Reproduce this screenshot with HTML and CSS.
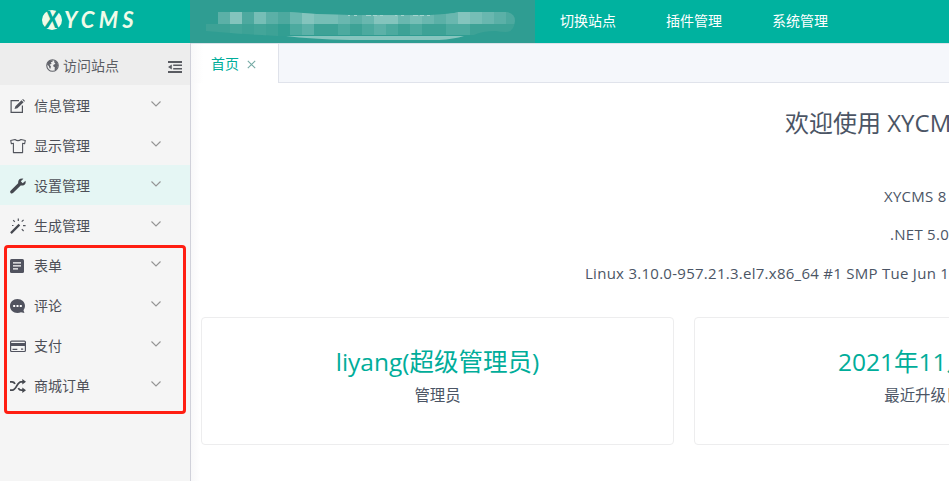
FILE: index.html
```html
<!DOCTYPE html>
<html lang="zh-CN">
<head>
<meta charset="utf-8">
<title>XYCMS</title>
<link rel="stylesheet" href="styles.css">
</head>
<body>
<header class="top">
  <div class="logo"><span class="logo-x">X</span><span class="logo-rest">YCMS</span></div>
  <div class="masked">
    <svg width="345" height="43" viewBox="0 0 345 43">
      <defs><clipPath id="brush"><path d="M28 12H100Q130 15 160 15H240Q262 14 268 12H316Q325 13 325 21Q324 32 316 32Q310 32 306 31Q292 31 284 35H98V36H88Q50 34 16 31V24H28Z"/></clipPath></defs>
      <g clip-path="url(#brush)" shape-rendering="crispEdges">
        <path fill="#4da99f" d="M28 12H328V24H28z"/><path fill="#3da296" d="M16 24H328V36H16z"/>
        <path fill="#5bb0a7" d="M28 12h12v12h-12zM76 12h12v12h-12zM160 12h12v12h-12zM244 12h12v12h-12zM304 12h12v12h-12z"/>
        <path fill="#84c4bd" d="M40 12h12v12h-12zM112 12h12v12h-12zM184 12h24v12h-24zM268 12h12v12h-12z"/>
        <path fill="#76beb6" d="M64 12h12v12h-12zM124 12h24v12h-24zM220 12h12v12h-12zM280 12h12v12h-12z"/>
        <path fill="#69b7af" d="M100 12h12v12h-12zM148 12h12v12h-12zM172 12h12v12h-12zM208 12h12v12h-12zM232 12h12v12h-12zM256 12h12v12h-12zM292 12h12v12h-12z"/>
        <path fill="#5cb1a8" d="M112 24h12v12h-12zM184 24h12v12h-12z"/>
        <path fill="#4caa9f" d="M100 24h12v12h-12zM148 24h12v12h-12zM172 24h12v12h-12zM196 24h12v12h-12zM220 24h12v12h-12zM256 24h24v12h-24z"/>
        <path fill="#43a599" d="M40 24h12v12h-12zM64 24h12v12h-12z"/>
        <path fill="#329e92" d="M88 24h12v12h-12z"/>
      </g>
      <path fill="#86c5be" d="M96 36H274Q264 39 249 40H160Q120 39 96 36Z"/>
      <path stroke="#a5d5cf" stroke-dasharray="2 4 3 9 5 2 4 3 3 12" d="M158 15.5H244"/>
    </svg>
  </div>
  <nav class="nav"><span>切换站点</span><span>插件管理</span><span>系统管理</span></nav>
</header>
<div class="body">
  <aside class="side">
    <div class="visit">
      <svg class="globe" viewBox="0 0 14 14"><circle cx="7" cy="7" r="6.2" fill="none" stroke="#62646b" stroke-width="1.2"/><path fill="#62646b" d="M1.5 4 4 1.5 7.3 1.3 7 3 5.2 3.6 6 5 3.8 6.2 5.3 7.8 4.8 10.5 3.8 10 3 7.5 1.2 6.3zM8.8 1.5 11.5 3 13 6.5 12.3 9.5 10.5 12 9.2 11.5 9.5 9 8 8 7.8 6.4 9.3 5.6 10.2 4.6 9 4z"/></svg>
      <span class="visit-text">访问站点</span>
      <svg class="fold" viewBox="0 0 14 12"><path fill="#595b61" d="M0 0h14v2H0zM5.2 3.5H14V5H5.2zM5.2 7H14v1.5H5.2zM0 10h14v2H0zM0 6 3.8 3.5v5z"/></svg>
    </div>
    <ul class="menu">
      <li><svg class="ico" viewBox="0 0 16 16"><path fill="none" stroke="#51545c" stroke-width="1.2" d="M9 2.6H1.1V14.4H12.4V7.5"/><path fill="#51545c" d="M4.5 11 5.4 8.3 11.5 2.2 13.6 4.3 7.4 10.3zM12.2 1.6 13 .9 15 2.9 14.2 3.7z"/></svg><span>信息管理</span><svg class="arrow" viewBox="0 0 10 6"><path d="M.5.5 5 5 9.5.5"/></svg></li>
      <li><svg class="ico" viewBox="0 0 16 16"><path fill="none" stroke="#51545c" stroke-width="1.1" stroke-linejoin="round" d="M5 1.5Q8 3.8 11 1.5L15.3 2.5 14.6 5.8 12.6 5.3V14.6H3.4V5.3L1.4 5.8.7 2.5Z"/></svg><span>显示管理</span><svg class="arrow" viewBox="0 0 10 6"><path d="M.5.5 5 5 9.5.5"/></svg></li>
      <li class="on"><svg class="ico" viewBox="0 0 16 16"><path fill="#45484f" d="M13.4.7 10.8 3.2 12.7 5.2 15.5 2.8Q16.6 7.8 10.7 7.6L3.3 14.8Q1.7 16 .6 14.9T.8 12.5L8.1 5.3Q8 0 13.4.7Z"/></svg><span>设置管理</span><svg class="arrow" viewBox="0 0 10 6"><path d="M.5.5 5 5 9.5.5"/></svg></li>
      <li><svg class="ico" viewBox="0 0 16 16"><path stroke="#45484f" stroke-width="2.2" d="M.9 15.1 9.4 6.6"/><path stroke="#51545c" stroke-width="1.2" d="M8.3.5V3M3.2 2.2 4.8 3.8M13.6 1.8 11.7 3.7M13 7.7h2.6M11.8 11.2l1.8 1.8M2 7.5h1.5"/></svg><span>生成管理</span><svg class="arrow" viewBox="0 0 10 6"><path d="M.5.5 5 5 9.5.5"/></svg></li>
      <li><svg class="ico" viewBox="0 0 16 16"><rect y="1" width="14" height="14" rx="1.5" fill="#51535f"/><path stroke="#fff" stroke-width="1.3" d="M3 4.8h8M3 7.8h8M3 10.8h5"/></svg><span>表单</span><svg class="arrow" viewBox="0 0 10 6"><path d="M.5.5 5 5 9.5.5"/></svg></li>
      <li><svg class="ico" viewBox="0 0 16 16"><path fill="#51535f" d="M7.4 1C11.8 1 15 4 15 8Q15 10.3 13.5 12.2L14.4 15 11 14.2Q9.5 15 7.4 15C3.2 15 0 12 0 8S3.2 1 7.4 1Z"/><path fill="#fff" d="M3.2 7h2v2h-2zM6.5 7h2v2h-2zM9.8 7h2v2h-2z"/></svg><span>评论</span><svg class="arrow" viewBox="0 0 10 6"><path d="M.5.5 5 5 9.5.5"/></svg></li>
      <li><svg class="ico" viewBox="0 0 16 16"><rect x=".6" y="3.1" width="14.8" height="10.4" rx="1" fill="none" stroke="#51535f" stroke-width="1.2"/><path fill="#51535f" d="M1 5h14v3H1zM2.5 10.7h4.8v1.2H2.5zM11 10.5h2.2v1.3H11z"/></svg><span>支付</span><svg class="arrow" viewBox="0 0 10 6"><path d="M.5.5 5 5 9.5.5"/></svg></li>
      <li><svg class="ico" viewBox="0 0 16 16"><path fill="none" stroke="#45484f" stroke-width="1.8" d="M0 12.2H2.3C6.5 12.2 7 3.8 11 3.8H13M0 3.8H2Q4 3.8 5 5.8M8.3 10.1Q9.5 12.2 11.2 12.2H13"/><path fill="#45484f" d="M12.3 1 16 3.8 12.3 6.6zM12.3 9.4 16 12.2 12.3 15z"/></svg><span>商城订单</span><svg class="arrow" viewBox="0 0 10 6"><path d="M.5.5 5 5 9.5.5"/></svg></li>
    </ul>
    <div class="marker"></div>
  </aside>
  <main class="main">
    <div class="tabs"><div class="tab"><span>首页</span><svg class="close" viewBox="0 0 9 9"><path d="M.8.8 8.2 8.2M8.2.8.8 8.2"/></svg></div></div>
    <h1 class="welcome">欢迎使用 XYCMS</h1>
    <div class="info">
      <p class="version">XYCMS 8</p>
      <p class="runtime">.NET 5.0</p>
      <p class="system">Linux 3.10.0-957.21.3.el7.x86_64 #1 SMP Tue Jun 1</p>
    </div>
    <div class="cards">
      <section class="card"><h2>liyang(超级管理员)</h2><p>管理员</p></section>
      <section class="card date"><h2>2021年11月</h2><p>最近升级日期</p></section>
    </div>
  </main>
</div>
</body>
</html>
```
FILE: styles.css
```css
* { box-sizing: border-box; }
body { margin: 0; width: 949px; height: 481px; overflow: hidden; background: #fff; color: #4b5565; font-family: "Open Sans", "Noto Sans CJK SC", sans-serif; font-size: 14px; }
h1, h2, p, ul { margin: 0; padding: 0; font-weight: 400; white-space: nowrap; }
svg { display: block; flex: none; }
.top { display: flex; height: 43px; background: #00b29f; color: #fff; }
.logo { width: 190px; flex: none; display: flex; align-items: center; padding: 0 0 4px 42px; color: #f0fbe9; }
.logo-x { width: 20px; height: 20px; border-radius: 50%; background: #f0fbe9; color: #00a996; font: italic 900 22px/20px Lato, sans-serif; text-align: center; }
.logo-rest { font: italic 700 22px/24px Lato, sans-serif; letter-spacing: 4.2px; padding-left: 2px; }
.masked { width: 345px; flex: none; background: #2f9d92; }
.nav { display: flex; gap: 50px; padding-left: 25px; line-height: 42px; }
.nav span { width: 56px; white-space: nowrap; }
.body { display: flex; height: 438px; }
.side { position: relative; width: 191px; flex: none; background: #f5f5f5; border-right: 1px solid #d0d1da; }
.visit { display: flex; align-items: center; height: 42px; padding: 2px 8px 0 46px; background: #ededed; color: #5b5d64; }
.globe { width: 13px; height: 13px; }
.visit-text { margin-left: 4px; flex: 1; }
.fold { width: 14px; height: 12px; margin-top: 4px; }
.menu { list-style: none; }
.menu li { display: flex; align-items: center; height: 40px; padding: 2px 29px 0 10px; color: #4d4f57; }
.menu li span { margin: 0 0 2px 8px; flex: 1; }
.menu .on { background: #e5f6f4; }
.ico { width: 16px; height: 16px; }
.arrow { width: 10px; height: 6px; margin: 0 0 5px; fill: none; stroke: #949494; stroke-width: 1.1; }
.marker { position: absolute; left: 4px; top: 202px; width: 182px; height: 169px; border: 3px solid #ff1e12; border-radius: 4px; }
.main { flex: 1; min-width: 0; overflow: hidden; background: linear-gradient(90deg, #f8f8f9, #fff 9px); }
.tabs { height: 40px; background: #f5f7fb; border-top: 1px solid #dce2e9; border-bottom: 1px solid #e0e3eb; }
.tab { display: flex; align-items: center; width: 88px; height: 39px; padding: 2px 0 0 20px; background: linear-gradient(90deg, #f8f8f9, #fff 12px); border-right: 1px solid #dfe2ea; color: #00ad9a; }
.tab span { margin-bottom: 4px; }
.close { width: 9px; height: 9px; margin: 0 0 1px 8px; fill: none; stroke: #75aaa5; stroke-width: 1.1; }
.welcome { height: 36px; margin-top: 22px; padding-left: 594px; font-size: 24px; line-height: 36px; }
.info { margin-top: 36px; font-size: 15px; line-height: 38.3px; letter-spacing: .27px; }
.version { padding-left: 693px; }
.runtime { padding-left: 699px; }
.system { padding-left: 394px; }
.cards { display: flex; gap: 20px; margin-top: 25px; padding-left: 10px; }
.card { width: 473px; height: 128px; flex: none; border: 1px solid #ededee; border-radius: 4px; background: #fff; text-align: center; padding-top: 26px; }
.card h2 { color: #00ad9a; font-size: 24.5px; line-height: 36px; }
.card p { font-size: 15.4px; line-height: 32px; }
.date h2 { text-align: left; padding-left: 143px; }
```
